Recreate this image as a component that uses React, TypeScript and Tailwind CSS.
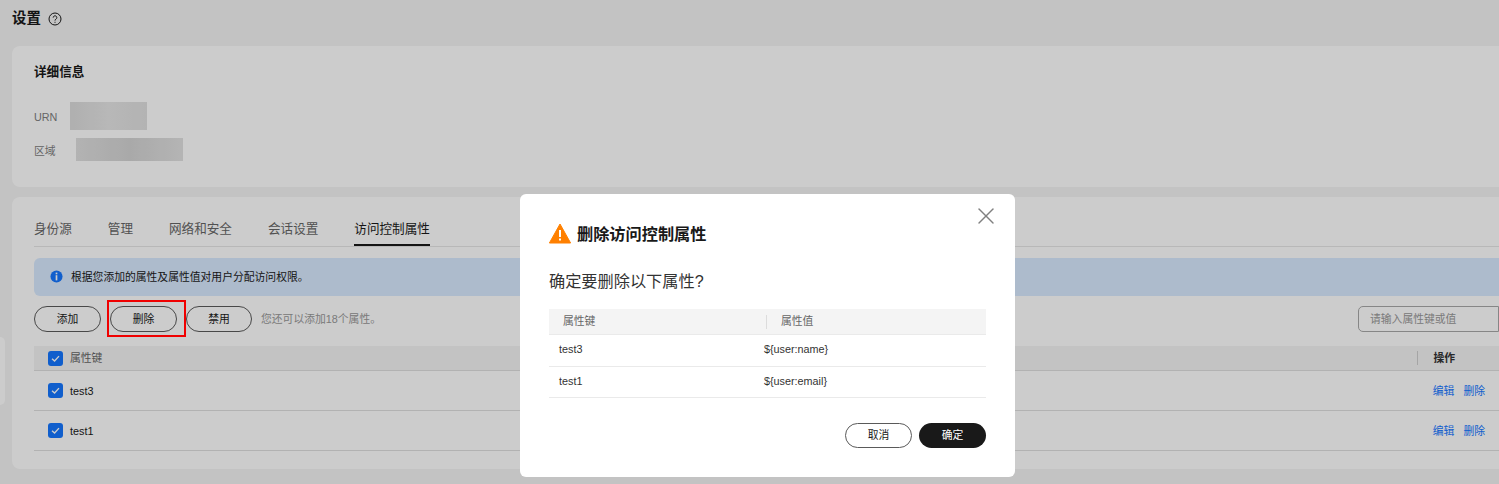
import { X } from 'lucide-react';

const font = { fontFamily: '"Liberation Sans", "Noto Sans CJK SC", sans-serif' };

const tabs = ['身份源', '管理', '网络和安全', '会话设置', '访问控制属性'];
const rows = [
  { key: 'test3', value: '${user:name}' },
  { key: 'test1', value: '${user:email}' },
];

function Checkbox() {
  return (
    <span className="flex h-[15px] w-[15px] shrink-0 items-center justify-center rounded-[3px] bg-[#1476ff]">
      <svg viewBox="0 0 12 12" className="h-[11px] w-[11px]" fill="none" stroke="#fff" strokeWidth="1.5">
        <path d="M2.2 6.2 5 8.8l4.8-5.4" />
      </svg>
    </span>
  );
}

function OutlineButton({ label, width }: { label: string; width: string }) {
  return (
    <button className={`flex h-[26px] ${width} items-center justify-center rounded-full border border-[#5a5a5a] text-[10.8px] text-[#191919]`}>
      {label}
    </button>
  );
}

export default function App() {
  return (
    <div style={font} className="relative h-[484px] w-[1499px] overflow-hidden bg-[#f4f4f4]">
      {/* Page */}
      <div className="pl-3">
        <div className="flex h-[46px] items-start pt-[10px]">
          <h1 className="text-[14.4px] leading-[16px] font-bold text-[#191919]">设置</h1>
          <svg viewBox="0 0 14 14" className="mt-[2px] ml-[7px] h-[14px] w-[14px]" fill="none" stroke="#191919" strokeWidth="1">
            <circle cx="7" cy="7" r="6" />
            <path d="M5.2 5.6a1.8 1.8 0 1 1 2.8 1.5c-.7.4-1 .8-1 1.5" />
            <path d="M7 9.8v1" />
          </svg>
        </div>

        <section className="h-[141px] w-[1520px] rounded-l-[8px] bg-white pt-[19px] pl-[22px]">
          <h2 className="text-[12.6px] leading-[15px] font-bold text-[#191919]">详细信息</h2>
          <div className="mt-[22px] flex h-[28px] items-center">
            <span className="w-[36px] pt-[2px] text-[10.8px] text-[#808080]">URN</span>
            <div className="h-[28px] w-[77px] bg-gradient-to-r from-[#dcdcdc] via-[#e6e6e6] to-[#e0e0e0]" />
          </div>
          <div className="mt-[8px] flex h-[23px] items-center">
            <span className="w-[42px] pt-[3px] text-[10.8px] text-[#808080]">区域</span>
            <div className="h-[23px] w-[107px] bg-gradient-to-r from-[#e0e0e0] via-[#d4d4d4] to-[#e2e2e2]" />
          </div>
        </section>

        <section className="mt-[10px] h-[272px] w-[1520px] rounded-l-[8px] bg-white px-[22px]">
          <nav className="flex h-[50px] w-[1465px] items-end gap-[36px] border-b border-[#e6e6e6]">
            {tabs.map((tab, i) => (
              <span
                key={tab}
                className={`h-[25px] text-[12.6px] leading-[16px] ${
                  i === 4 ? 'border-b-[2px] border-[#191919] text-[#191919]' : 'text-[#666]'
                }`}
              >
                {tab}
              </span>
            ))}
          </nav>

          <div className="mt-[11px] flex h-[38px] w-[1465px] items-center rounded-l-[6px] bg-[#d9eaff] pl-[16px] text-[10.8px] text-[#191919]">
            <svg viewBox="0 0 14 14" className="mr-[8px] mb-[1px] h-[13px] w-[13px]">
              <circle cx="7" cy="7" r="6.5" fill="#1476ff" />
              <rect x="6.1" y="2.8" width="1.8" height="1.8" fill="#fff" />
              <rect x="6.1" y="5.6" width="1.8" height="5.6" fill="#fff" />
            </svg>
            根据您添加的属性及属性值对用户分配访问权限。
          </div>

          <div className="mt-[10px] flex h-[26px] w-[1465px] items-center">
            <OutlineButton label="添加" width="w-[67px]" />
            <div className="ml-[9px]">
              <OutlineButton label="删除" width="w-[67px]" />
            </div>
            <div className="ml-[9px]">
              <OutlineButton label="禁用" width="w-[66px]" />
            </div>
            <span className="ml-[9px] text-[10.8px] text-[#999]">您还可以添加18个属性。</span>
            <div className="ml-auto flex h-[26px] w-[141px] items-center rounded-l-[5px] border border-[#a8a8a8] pl-[11px] text-[10.8px] text-[#999]">
              请输入属性键或值
            </div>
          </div>

          <div className="mt-[14px] w-[1465px] text-[10.8px]">
            <div className="flex h-[25px] items-center border-b border-[#dfdfdf] bg-[#f4f4f4] pl-[14px] text-[#666]">
              <Checkbox />
              <span className="ml-[7px]">属性键</span>
              <span className="ml-auto h-[14px] w-px bg-[#cfcfcf]" />
              <span className="mr-[44px] ml-[15px] font-bold text-[#333]">操作</span>
            </div>
            {rows.map((row) => (
              <div key={row.key} className="flex h-[40px] items-center border-b border-[#dfdfdf] pl-[14px] text-[#191919]">
                <Checkbox />
                <span className="ml-[7px] pt-[2px]">{row.key}</span>
                <span className="ml-auto pt-[2px] text-[#1476ff]">编辑</span>
                <span className="mr-[14px] ml-[9px] pt-[2px] text-[#1476ff]">删除</span>
              </div>
            ))}
          </div>
        </section>
      </div>

      {/* Collapsed side handle */}
      <div className="absolute top-[337px] left-0 h-[68px] w-[5px] rounded-r-[6px] bg-white" />

      {/* Mask */}
      <div className="absolute inset-0 bg-black/20" />

      {/* Annotation */}
      <div className="absolute top-[300px] left-[107px] h-[37px] w-[79px] border-2 border-[#f00000]" />

      {/* Dialog */}
      <div className="absolute top-[194px] left-[520px] h-[283px] w-[495px] rounded-[6px] bg-white px-[29px]">
        <X className="absolute top-[8px] right-[15px] h-[28px] w-[28px] text-[#808080]" strokeWidth={1.2} />
        <div className="flex h-[52px] items-end">
          <svg viewBox="0 0 22 20" className="mb-[2px] h-[21px] w-[22px]">
            <path d="M11 .5 21.6 19.5H.4Z" fill="#ff8000" stroke="#ff8000" strokeLinejoin="round" />
            <rect x="10" y="6.5" width="2" height="7" fill="#fff" />
            <rect x="10" y="15" width="2" height="2" fill="#fff" />
          </svg>
          <h2 className="ml-[6px] text-[16.2px] leading-[24px] font-bold text-[#191919]">删除访问控制属性</h2>
        </div>
        <p className="mt-[23px] text-[16.2px] leading-[24px] text-[#333]">确定要删除以下属性?</p>
        <div className="mt-[16px] text-[10.8px]">
          <div className="flex h-[26px] items-center border-b border-[#eaeaea] bg-[#f4f4f4] text-[#666]">
            <span className="w-[217px] pl-[14px]">属性键</span>
            <span className="h-[14px] w-px bg-[#dcdcdc]" />
            <span className="pl-[14px]">属性值</span>
          </div>
          {rows.map((row) => (
            <div key={row.key} className="flex h-[31.5px] items-center border-b border-[#eaeaea] pb-[2px] text-[#333]">
              <span className="w-[215px] pl-[10px]">{row.key}</span>
              <span>{row.value}</span>
            </div>
          ))}
        </div>
        <div className="mt-[25px] flex justify-end gap-[7px]">
          <button className="flex h-[25px] w-[67px] items-center justify-center rounded-full border border-[#5a5a5a] text-[10.8px] text-[#191919]">
            取消
          </button>
          <button className="flex h-[25px] w-[67px] items-center justify-center rounded-full bg-[#191919] text-[10.8px] text-white">
            确定
          </button>
        </div>
      </div>
    </div>
  );
}
